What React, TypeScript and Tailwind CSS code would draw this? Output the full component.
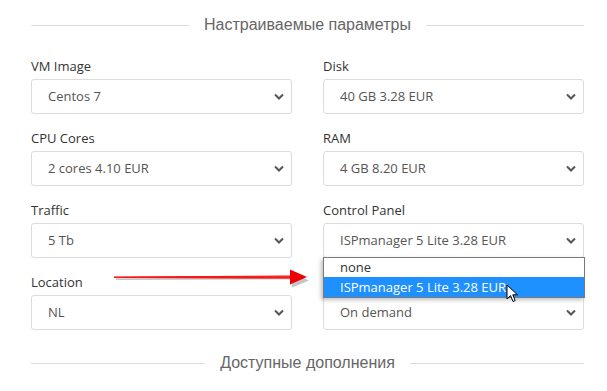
const fields = [
  { label: "VM Image", value: "Centos 7" },
  { label: "Disk", value: "40 GB 3.28 EUR" },
  { label: "CPU Cores", value: "2 cores 4.10 EUR" },
  { label: "RAM", value: "4 GB 8.20 EUR" },
  { label: "Traffic", value: "5 Tb" },
  { label: "Control Panel", value: "ISPmanager 5 Lite 3.28 EUR", open: true },
  { label: "Location", value: "NL" },
  // label of this one is hidden under the open list
  { label: "", value: "On demand" },
];

function Chevron() {
  return (
    <svg width="10" height="7" viewBox="0 0 10 7" className="shrink-0">
      <path d="M1 1.5 L5 5.5 L9 1.5" fill="none" stroke="#555" strokeWidth="2" />
    </svg>
  );
}

function Divider({ title }: { title: string }) {
  return (
    <div className="flex items-center gap-[15px]">
      <div className="h-px flex-1 bg-[#dcdcdc]"></div>
      <span className="font-['Liberation_Sans',Arial,sans-serif] text-[16px] text-[#666]">{title}</span>
      <div className="h-px flex-1 bg-[#dcdcdc]"></div>
    </div>
  );
}

function Dropdown() {
  return (
    <div className="absolute left-[-1px] right-[-2px] top-[100%] z-10 border border-[#7a7a7a] bg-white shadow-[-2px_2px_4px_rgba(0,0,0,0.25)]">
      <div className="h-[19px] pl-[16px] leading-[19px] text-[#333]">none</div>
      <div className="relative h-[20px] bg-[#1e90ff] pl-[16px] leading-[20px] text-white">
        ISPmanager 5 Lite 3.28 EUR
        <svg width="13" height="20" viewBox="0 0 13 20" className="absolute left-[182px] top-[7px]">
          <path
            d="M1 1 L1 15 L4.5 11.5 L7 17.5 L9.2 16.6 L6.8 10.8 L11.5 10.8 Z"
            fill="#fff"
            stroke="#000"
            strokeWidth="1"
            strokeLinejoin="round"
          />
        </svg>
      </div>
    </div>
  );
}

function RedArrow() {
  return (
    <svg width="205" height="26" viewBox="0 0 205 26" className="absolute left-[110px] top-[265px]">
      <path d="M5 13.5 L181 13 L181 21 L198 14 L181 6.5 L181 11.5 L5 12 Z" fill="#555" opacity="0.35" transform="translate(1 1.5)" />
      <path d="M4 11.5 L180 10.5 L180 4.5 L197 12 L180 19.5 L180 13.5 L4 13 Z" fill="#ee0000" />
      <path d="M4 12 L180 11 L180 12.5 L4 12.6 Z" fill="#ff2a2a" />
    </svg>
  );
}

export default function App() {
  return (
    <div className="relative h-[391px] w-[607px] overflow-hidden bg-white pl-[31px] pr-[23px] font-['Open_Sans',sans-serif] text-[13px]">
      <div className="flex h-[50px] flex-col justify-center">
        <Divider title="Настраиваемые параметры" />
      </div>
      <div className="mt-[7px] grid grid-cols-2 gap-x-[31px] gap-y-[15px]">
        {fields.map((f) => (
          <div key={f.value}>
            <div className="mb-[4px] h-[18px] leading-[18px] text-[#333]">{f.label}</div>
            <div className="relative flex h-[35px] items-center justify-between rounded-[3px] border border-[#dcdcdc] pl-[16px] pr-[7px] text-[#555]">
              <span>{f.value}</span>
              <Chevron />
              {f.open && <Dropdown />}
            </div>
          </div>
        ))}
      </div>
      <div className="mt-[18px] flex h-[30px] flex-col justify-center">
        <Divider title="Доступные дополнения" />
      </div>
      <RedArrow />
    </div>
  );
}
